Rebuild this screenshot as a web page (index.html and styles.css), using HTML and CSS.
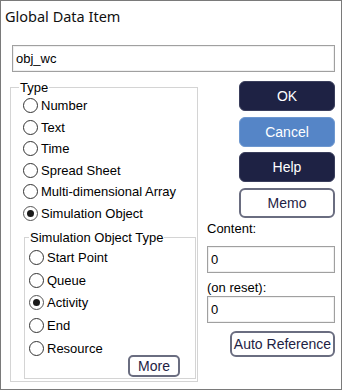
FILE: index.html
```html
<!DOCTYPE html>
<html>
<head>
<meta charset="utf-8">
<link rel="stylesheet" href="styles.css">
</head>
<body>
<div class="window">
  <div class="title">Global Data Item</div>
  <div class="name-row"><div class="field name-field">obj_wc</div></div>
  <div class="body">
    <fieldset class="group type-group">
      <legend>Type</legend>
      <div class="radios outer-radios">
        <div class="radio"><span class="dot"></span>Number</div>
        <div class="radio"><span class="dot"></span>Text</div>
        <div class="radio"><span class="dot"></span>Time</div>
        <div class="radio"><span class="dot"></span>Spread Sheet</div>
        <div class="radio"><span class="dot"></span>Multi-dimensional Array</div>
        <div class="radio checked"><span class="dot"></span>Simulation Object</div>
      </div>
      <fieldset class="group sim-group">
        <legend>Simulation Object Type</legend>
        <div class="radios inner-radios">
          <div class="radio"><span class="dot"></span>Start Point</div>
          <div class="radio"><span class="dot"></span>Queue</div>
          <div class="radio checked"><span class="dot"></span>Activity</div>
          <div class="radio"><span class="dot"></span>End</div>
          <div class="radio"><span class="dot"></span>Resource</div>
        </div>
        <div class="more-row"><div class="btn outline more">More</div></div>
      </fieldset>
    </fieldset>
    <div class="side">
      <div class="btn dark">OK</div>
      <div class="btn light">Cancel</div>
      <div class="btn dark">Help</div>
      <div class="btn outline">Memo</div>
      <div class="label content-label">Content:</div>
      <div class="field small-field content-field">0</div>
      <div class="label reset-label">(on reset):</div>
      <div class="field small-field reset-field">0</div>
      <div class="auto-row"><div class="btn outline auto">Auto Reference</div></div>
    </div>
  </div>
</div>
</body>
</html>
```
FILE: styles.css
```css
html, body {
  margin: 0;
  padding: 0;
  background: #ffffff;
}
.window {
  width: 342px;
  height: 390px;
  box-sizing: border-box;
  border: 1px solid #7a7a7a;
  background: #ffffff;
  font-family: "Liberation Sans", Arial, sans-serif;
  font-size: 13px;
  color: #000000;
}
.title {
  font-family: "Noto Sans", "Open Sans", sans-serif;
  font-size: 14.5px;
  height: 31px;
  line-height: 31px;
  padding-left: 4px;
  color: #111111;
}
.name-row {
  padding: 13px 6px 0 11px;
}
.field {
  box-sizing: border-box;
  border: 1px solid #a0a0a0;
  box-shadow: inset 0 0 0 1px #f0f0f0;
  background: #ffffff;
  padding-left: 3px;
  font-size: 13px;
  display: flex;
  align-items: center;
}
.name-field {
  height: 27px;
}
.body {
  display: flex;
  padding: 9px 0 0 9px;
}
.group {
  margin: 0;
  border: 1px solid #d4d4d4;
  box-shadow: 1px 1px 0 #ffffff;
  min-width: 0;
}
.group legend {
  padding: 0 1px;
  line-height: 13px;
}
.type-group {
  flex: none;
  width: 188px;
  height: 301px;
  box-sizing: border-box;
  padding: 0 0 0 12px;
  display: flex;
  flex-direction: column;
}
.type-group > legend {
  margin-left: -4px;
}
.radios {
  display: flex;
  flex-direction: column;
}
.radio {
  display: flex;
  align-items: center;
  height: 21.5px;
  white-space: nowrap;
}
.dot {
  box-sizing: border-box;
  width: 15px;
  height: 15px;
  border: 1px solid #333333;
  border-radius: 50%;
  margin-right: 3px;
  flex: none;
  display: flex;
  align-items: center;
  justify-content: center;
  background: #ffffff;
}
.checked .dot {
  border-color: #555555;
}
.checked .dot::after {
  content: "";
  width: 7px;
  height: 7px;
  border-radius: 50%;
  background: #1a1a1a;
}
.outer-radios {
  margin-top: 1px;
}
.sim-group {
  margin: 7px 0 0 1px;
  width: 172px;
  height: 148px;
  box-sizing: border-box;
  padding: 0 0 0 4px;
}
.sim-group > legend {
  margin-left: 0;
}
.inner-radios .radio {
  height: 22.8px;
}
.inner-radios {
  margin-top: 2px;
}
.more-row {
  display: flex;
  justify-content: flex-end;
  padding-right: 15px;
  margin-top: -5px;
}
.btn {
  box-sizing: border-box;
  display: flex;
  align-items: center;
  justify-content: center;
  border-radius: 6px;
  font-size: 14px;
}
.btn.dark {
  background: #1e2244;
  color: #ffffff;
  border: 1px solid #3a3e5c;
}
.btn.light {
  background: #5585c7;
  color: #ffffff;
  border: 1px solid #6e98d0;
}
.btn.outline {
  background: #ffffff;
  color: #1e2244;
  border: 2px solid #6a6d80;
}
.more {
  width: 52px;
  height: 22px;
  border-radius: 5px;
}
.side {
  flex: none;
  margin-left: 9px;
  width: 128px;
  display: flex;
  flex-direction: column;
}
.side > .btn {
  margin-left: 32px;
  height: 30px;
  margin-top: 5.5px;
}
.side > .btn:first-child {
  margin-top: 0;
}
.label {
  height: 14px;
  line-height: 14px;
}
.content-label {
  margin-top: 4px;
}
.small-field {
  height: 27px;
}
.content-field {
  margin-top: 10px;
}
.reset-label {
  margin-top: 8px;
}
.reset-field {
  margin-top: 1.5px;
}
.auto-row {
  display: flex;
  justify-content: flex-end;
  margin-top: 8px;
}
.auto {
  width: 105px;
  height: 26px;
}
```
